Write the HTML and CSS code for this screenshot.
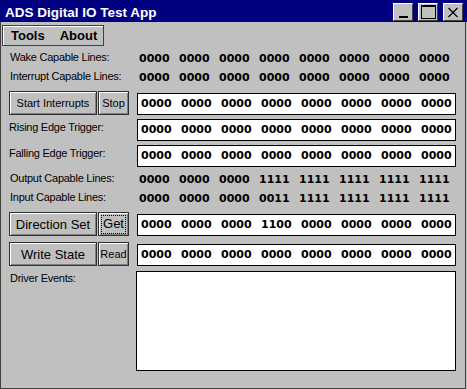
FILE: index.html
```html
<!DOCTYPE html>
<html lang="en">
<head>
    <meta charset="UTF-8">
    <title>ADS Digital IO Test App</title>
    <link rel="stylesheet" href="styles.css">
</head>
<body>

<div class="window">
    <div class="titlebar">
        <span class="title">ADS Digital IO Test App</span>
        <div class="caps">
            <div class="cap"><span class="ico-min"></span></div>
            <div class="cap"><span class="ico-max"></span></div>
            <div class="cap">
                <svg width="12" height="11" viewBox="0 0 12 11"><path d="M1.5 1 L10.5 10 M10.5 1 L1.5 10" stroke="#000" stroke-width="1.2" fill="none"/></svg>
            </div>
        </div>
    </div>

    <div class="frame">
        <div class="menubar">
            <div class="menu"><span>Tools</span><span>About</span></div>
        </div>

        <div class="content">
            <div class="row static">
                <div class="lbl">Wake Capable Lines:</div>
                <div class="bits"><span>0000</span><span>0000</span><span>0000</span><span>0000</span><span>0000</span><span>0000</span><span>0000</span><span>0000</span></div>
            </div>
            <div class="row static">
                <div class="lbl">Interrupt Capable Lines:</div>
                <div class="bits"><span>0000</span><span>0000</span><span>0000</span><span>0000</span><span>0000</span><span>0000</span><span>0000</span><span>0000</span></div>
            </div>

            <div class="row btnrow first">
                <div class="btns">
                    <div class="btn small wide">Start Interrupts</div>
                    <div class="btn small narrow">Stop</div>
                </div>
                <div class="box bits"><span>0000</span><span>0000</span><span>0000</span><span>0000</span><span>0000</span><span>0000</span><span>0000</span><span>0000</span></div>
            </div>

            <div class="row boxrow">
                <div class="lbl top">Rising Edge Trigger:</div>
                <div class="box bits"><span>0000</span><span>0000</span><span>0000</span><span>0000</span><span>0000</span><span>0000</span><span>0000</span><span>0000</span></div>
            </div>
            <div class="row boxrow">
                <div class="lbl top">Falling Edge Trigger:</div>
                <div class="box bits"><span>0000</span><span>0000</span><span>0000</span><span>0000</span><span>0000</span><span>0000</span><span>0000</span><span>0000</span></div>
            </div>

            <div class="row static out">
                <div class="lbl">Output Capable Lines:</div>
                <div class="bits"><span>0000</span><span>0000</span><span>0000</span><span>1111</span><span>1111</span><span>1111</span><span>1111</span><span>1111</span></div>
            </div>
            <div class="row static">
                <div class="lbl">Input Capable Lines:</div>
                <div class="bits"><span>0000</span><span>0000</span><span>0000</span><span>0011</span><span>1111</span><span>1111</span><span>1111</span><span>1111</span></div>
            </div>

            <div class="row btnrow dir">
                <div class="btns">
                    <div class="btn wide">Direction Set</div>
                    <div class="btn narrow"><span class="focus">Get</span></div>
                </div>
                <div class="box bits"><span>0000</span><span>0000</span><span>0000</span><span>1100</span><span>0000</span><span>0000</span><span>0000</span><span>0000</span></div>
            </div>
            <div class="row btnrow write">
                <div class="btns">
                    <div class="btn wide">Write State</div>
                    <div class="btn small narrow">Read</div>
                </div>
                <div class="box bits"><span>0000</span><span>0000</span><span>0000</span><span>0000</span><span>0000</span><span>0000</span><span>0000</span><span>0000</span></div>
            </div>

            <div class="row events">
                <div class="lbl ev">Driver Events:</div>
                <div class="box big"></div>
            </div>
        </div>
    </div>
</div>

</body>
</html>
```

FILE: styles.css
```css
* {
    box-sizing: border-box;
}

body {
    margin: 0;
    background: #c0c0c0;
    font-family: "Liberation Sans", Arial, sans-serif;
    font-size: 11px;
    color: #000;
}

.window {
    width: 467px;
    height: 389px;
    background: #c0c0c0;
}

/* title bar */
.titlebar {
    height: 22px;
    background: #000080;
    display: flex;
    align-items: flex-start;
    justify-content: space-between;
}

.title {
    color: #fff;
    font-weight: bold;
    font-size: 13.5px;
    line-height: 16px;
    padding: 5px 0 0 5px;
}

.caps {
    display: flex;
    gap: 5px;
    padding: 3px 4px 0 0;
}

.cap {
    width: 20px;
    height: 18px;
    background: #c0c0c0;
    border-top: 1px solid #fff;
    border-left: 1px solid #fff;
    border-right: 1px solid #404040;
    border-bottom: 1px solid #404040;
    display: flex;
    align-items: center;
    justify-content: center;
}

.ico-min {
    width: 9px;
    height: 2px;
    background: #000;
    margin-top: 9px;
}

.ico-max {
    width: 15px;
    height: 14px;
    border: 1px solid #000;
    border-top-width: 2px;
}

/* window frame */
.frame {
    width: 466px;
    height: 367px;
    border-left: 1px solid #404040;
    border-right: 1px solid #404040;
    border-bottom: 1px solid #404040;
}

.menubar {
    padding: 3px 0 0 1px;
    height: 26px;
}

.menu {
    width: 102px;
    height: 21px;
    border: 1px solid #404040;
    box-shadow: inset 1px 1px 0 #fff;
    display: flex;
    gap: 15px;
    padding-left: 8px;
    font-weight: bold;
    font-size: 13px;
    line-height: 19px;
}

/* rows */
.content {
    padding: 0 9px 0 7px;
}

.row {
    display: flex;
}

.lbl {
    width: 129px;
    flex-shrink: 0;
    padding-left: 2px;
    letter-spacing: -0.25px;
}

.static {
    height: 19px;
    line-height: 19px;
}

.static .bits {
    padding: 1px 0 0 2px;
}

.static.out {
    margin-top: 2px;
}

.bits {
    font-family: "DejaVu Sans", sans-serif;
    font-weight: bold;
    font-size: 11px;
    white-space: nowrap;
}

.bits span {
    display: inline-block;
    width: 40px;
}

.bits span:last-child {
    width: auto;
}

.box {
    width: 320px;
    height: 22px;
    background: #fff;
    border: 1px solid #000;
    line-height: 20px;
    padding-left: 3px;
}

.lbl.top {
    line-height: 16px;
    padding-left: 1px;
}

.boxrow {
    margin-top: 4px;
}

/* buttons */
.btnrow {
    height: 24px;
}

.btnrow .box {
    margin-top: 2px;
}

.btnrow.first {
    margin-top: 5px;
}

.btnrow.dir {
    margin-top: 5px;
}

.btnrow.write {
    margin-top: 6px;
}

.btns {
    width: 129px;
    flex-shrink: 0;
    display: flex;
    gap: 1px;
    padding-left: 1px;
}

.btn {
    height: 24px;
    border: 1px solid #303030;
    box-shadow: inset 1px 1px 0 #fff, inset -1px -1px 0 #808080;
    display: flex;
    align-items: center;
    justify-content: center;
    font-size: 13px;
}

.btn.small {
    font-size: 11px;
}

.btn.wide {
    width: 88px;
}

.btn.narrow {
    width: 31px;
}

.focus {
    outline: 1px dotted #000;
    padding: 1px 1px 2px;
    line-height: 14px;
}

/* events */
.events {
    margin-top: 5px;
}

.lbl.ev {
    line-height: 14px;
    padding-left: 2px;
}

.box.big {
    height: 100px;
    margin-left: -1px;
}
```
